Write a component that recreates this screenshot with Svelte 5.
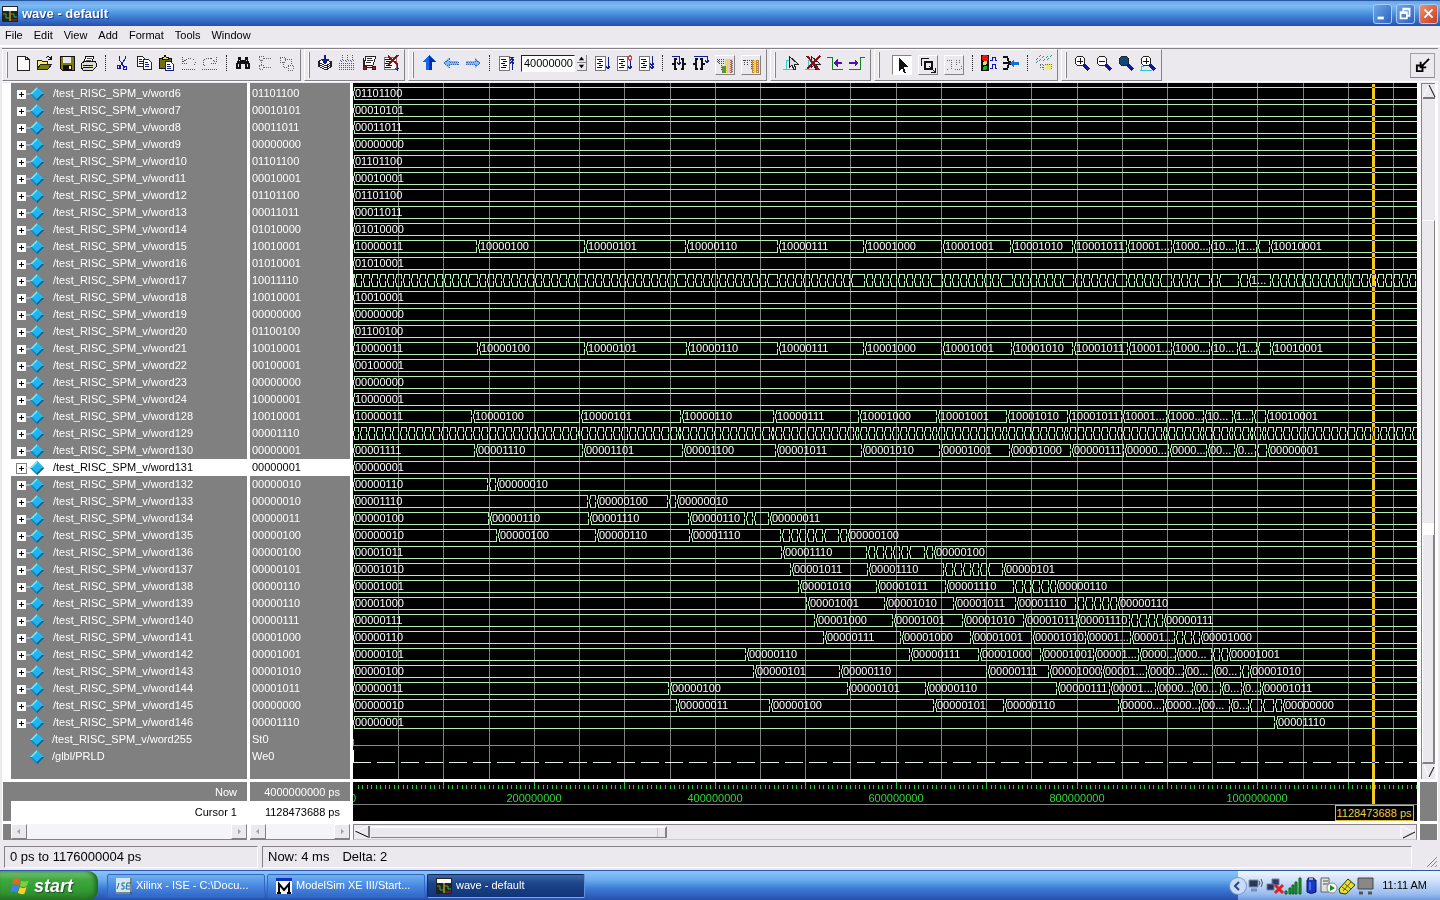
<script lang="ts">
	// window x of time 0, and pixels per 50 000 000 ps
	const ORIGIN = 353;
	const STEP = 45.22;

	const t15 = '10000011 478:10000100 586:10000101 687:10000110 779:10000111 865:10001000 943:10001001 1012:10001010 1074:10001011 1128:10001... 1173:1000... 1211:10... 1238:1... 1258: 1271:10010001';
	const t21 = '10000011 479:10000100 586:10000101 688:10000110 779:10000111 865:10001000 943:10001001 1013:10001010 1074:10001011 1129:10001... 1173:1000... 1211:10... 1239:1... 1258: 1272:10010001';
	const t128 = '10000011 473:10000100 581:10000101 682:10000110 775:10000111 860:10001000 938:10001001 1008:10001010 1069:10001011 1123:10001... 1168:1000... 1205:10... 1234:1... 1254: 1267:10010001';

	// repeated counter steps that start over at every change of the program counter
	function ticks(resets: number[], end: number, minGap: number) {
		const out: number[] = [];
		resets.forEach((from, i) => {
			const to = resets[i + 1] ?? end;
			out.push(from);
			for (let x = from + 8.05; x < to - minGap; x += 8.05) out.push(Math.round(x));
		});
		return out.map((x) => x + ':').join(' ');
	}
	const t17 = ' ' + ticks([355, 479, 587, 687, 779, 866, 944, 1014, 1075, 1128, 1173, 1211], 1233, 8) + ' 1240: 1249:1... ' + ticks([1272], 2600, 0);
	const t129 = ' ' + ticks([360, 473, 581, 682, 775, 860, 938, 1008, 1069, 1123, 1168, 1205, 1234, 1254, 1267], 2600, 3);

	const data: [string, string, string?][] = [
		['word6', '01101100'],
		['word7', '00010101'],
		['word8', '00011011'],
		['word9', '00000000'],
		['word10', '01101100'],
		['word11', '00010001'],
		['word12', '01101100'],
		['word13', '00011011'],
		['word14', '01010000'],
		['word15', '10010001', t15],
		['word16', '01010001'],
		['word17', '10011110', t17],
		['word18', '10010001'],
		['word19', '00000000'],
		['word20', '01100100'],
		['word21', '10010001', t21],
		['word22', '00100001'],
		['word23', '00000000'],
		['word24', '10000001'],
		['word128', '10010001', t128],
		['word129', '00001110', t129],
		['word130', '00000001', '00001111 476:00001110 584:00001101 684:00001100 777:00001011 863:00001010 941:00001001 1011:00001000 1072:00000111 1125:00000... 1170:0000... 1208:00... 1236:0... 1257: 1268:00000001'],
		['word131', '00000001'],
		['word132', '00000010', '00000110 489: 497:00000010'],
		['word133', '00000010', '00001110 589: 597:00000100 669: 677:00000010'],
		['word134', '00000011', '00000100 490:00000110 590:00001110 690:00000110 746: 754: 770:00000011'],
		['word135', '00000100', '00000010 498:00000100 597:00000110 691:00001110 782: 791: 799: 807: 815: 824: 840: 848:00000100'],
		['word136', '00000100', '00001011 783:00001110 868: 876: 885: 893: 901: 909: 926: 934:00000100'],
		['word137', '00000101', '00001010 792:00001011 869:00001110 945: 954: 963: 972: 980: 988: 1004:00000101'],
		['word138', '00000110', '00001001 800:00001010 878:00001011 947:00001110 1015: 1024: 1032: 1041: 1050: 1057:00000110'],
		['word139', '00000110', '00001000 808:00001001 886:00001010 955:00001011 1017:00001110 1077: 1085: 1094: 1102: 1110: 1118:00000110'],
		['word140', '00000111', '00000111 816:00001000 894:00001001 964:00001010 1025:00001011 1078:00001110 1131: 1139: 1148: 1156: 1164:00000111'],
		['word141', '00001000', '00000110 825:00000111 902:00001000 972:00001001 1033:00001010 1087:00001... 1132:00001... 1176: 1184: 1193: 1201:00001000'],
		['word142', '00001001', '00000101 747:00000110 911:00000111 980:00001000 1042:00001001 1095:00001... 1140:0000... 1177:000... 1213: 1221: 1229:00001001'],
		['word143', '00001010', '00000100 755:00000101 841:00000110 988:00000111 1050:00001000 1103:00001... 1148:0000... 1185:00... 1214:00... 1242: 1250:00001010'],
		['word144', '00001011', '00000011 670:00000100 849:00000101 927:00000110 1058:00000111 1111:00001... 1157:0000... 1194:00... 1222:0... 1243:0... 1262:00001011'],
		['word145', '00000000', '00000010 678:00000011 771:00000100 935:00000101 1005:00000110 1120:00000... 1165:0000... 1201:00... 1231:0... 1250: 1263: 1275: 1283:00000000'],
		['word146', '00001110', '00000001 1276:00001110']
	];

	const buses = data.map(([name, value, trace], row) => {
		const top = 4 + row * 17;
		const parts = (trace ?? value).split(' ');
		const edges = parts.slice(1).map((p) => Number(p.split(':')[0]) - ORIGIN);
		const labels = [{ x: 2, text: parts[0] }, ...parts.slice(1).map((p, i) => ({ x: edges[i] + 2, text: p.split(':')[1] }))];
		let d = '';
		[0, ...edges].forEach((x, i) => {
			const end = edges[i] ?? 3000;
			d += `M${x} ${top + 8}V${top + 5}L${x + 1} ${top + 4}V${top}H${end - 2}V${top + 3}L${end - 1} ${top + 5}`;
			d += `M${x} ${top + 8}L${x + 1} ${top + 9}V${top + 12}H${end - 2}V${top + 9}L${end - 1} ${top + 7}`;
		});
		return { name: '/test_RISC_SPM_v/' + name, value, top, d, labels: labels.filter((l) => l.text) };
	});

	const rows = [
		...buses.map((b) => ({ name: b.name, value: b.value, bus: true })),
		{ name: '/test_RISC_SPM_v/word255', value: 'St0', bus: false },
		{ name: '/glbl/PRLD', value: 'We0', bus: false }
	];
	let selected = $state('/test_RISC_SPM_v/word131');

	const grid = Array.from({ length: 60 }, (_, i) => Math.round((i + 1) * STEP));
	const minor = Array.from({ length: 600 }, (_, i) => Math.round((i + 1) * STEP / 10));
	const times = Array.from({ length: 6 }, (_, i) => ({ x: Math.round(i * 4 * STEP), label: String(i * 200000000) }));
	const cursorX = 1021;

	const menus = ['File', 'Edit', 'View', 'Add', 'Format', 'Tools', 'Window'];

	const sheet = '<path d="M1 1H11V15H1z" fill="#fff" stroke="#777"/><path d="M3 4H8M5 6H9M3 8H7M5 10H9M3 12H8" stroke="#111"/>';
	const lens = '<path d="M10 10L15 15" stroke="#1018a0" stroke-width="3"/><circle cx="6" cy="6" r="5" fill="LENS" stroke="#222"/>';
	const pointer = '<path d="M0 14H13M3 14V5H6" stroke="#30d0d8" fill="none"/><path d="M6 1V13L9 10L11 15L13 14L11 9H15z" fill="#ddd" stroke="#222"/>';
	const icons: Record<string, string> = {
		new: '<path d="M2 1H10L14 4V15H2z" fill="#fff" stroke="#222"/><path d="M10 1V4H14" fill="none" stroke="#222"/>',
		open: '<path d="M0 14V5H4L5 6H10V9" fill="#f8f060" stroke="#222"/><path d="M0 14L4 9H15L11 14z" fill="#808000" stroke="#222"/><path d="M9 3Q12 0 14 4M14 1V4H11" fill="none" stroke="#111"/>',
		save: '<path d="M1 1H15V15H3L1 13z" fill="#808000" stroke="#111"/><path d="M4 2H12V8H4z" fill="#e8e8e8"/><path d="M4 10H13V15H4z" fill="#111"/><path d="M10 11H12V14H10z" fill="#eee"/>',
		print: '<path d="M5 1H13L11 7H3z" fill="#fff" stroke="#111"/><path d="M1 8L4 6H14L15 8V12L12 15H2L0 12z" fill="#ddd" stroke="#111"/><path d="M2 10H12M2 12H12" stroke="#111"/><path d="M6 3H11M5 5H10" stroke="#555"/><path d="M8 11H10V12H8z" fill="#e8e000"/>',
		cut: '<path d="M5 1V4L8 9L11 13M11 1V4L8 9L5 13" fill="none" stroke="#102080"/><circle cx="5" cy="12" r="2" fill="none" stroke="#1010c0"/><circle cx="11" cy="13" r="2" fill="none" stroke="#1010c0"/>',
		copy: '<path d="M1 1H6L9 4V11H1z" fill="#fff" stroke="#222"/><path d="M3 4H6M3 6H7M3 8H7" stroke="#222"/><path d="M7 4H12L15 7V14H7z" fill="#fff" stroke="#102080"/><path d="M9 7H12M9 9H13M9 11H13" stroke="#102080"/>',
		paste: '<path d="M1 3H13V13H1z" fill="#707010" stroke="#111"/><path d="M4 4V2H6L7 0L8 2H10V4z" fill="#f0e840" stroke="#111"/><path d="M7 6H12L15 9V15H7z" fill="#fff" stroke="#102080"/><path d="M9 9H12M9 11H13M9 13H13" stroke="#102080"/>',
		undo: '<path d="M2 2V8H8M3 7L8 3H12L15 6V9L12 12M2 14H16" fill="none" stroke="#555" stroke-dasharray="1 1"/>',
		redo: '<path d="M14 2V8H8M13 7L9 3H4L1 6V9L4 12M0 14H15" fill="none" stroke="#555" stroke-dasharray="1 1"/>',
		find: '<path d="M3 2H6V5H10V2H13V5L15 9V14H10V9H6V14H1V9L3 5z" fill="#111"/><path d="M3 9V12M12 9V12M4 5H5M11 5H12" stroke="#ddd"/>',
		tree: '<path d="M2 1H6V5H2zM2 10H6V14H2zM4 5V10M7 3H15M7 12H15" fill="none" stroke="#666" stroke-dasharray="1 1"/>',
		path: '<path d="M1 2H6V7H1zM9 10H14V15H9zM6 4H12V9M4 7V12H8" fill="none" stroke="#666" stroke-dasharray="1 1"/>',
		compile: '<path d="M1 11L6 8L15 11L9 15z" fill="#fff" stroke="#222"/><path d="M1 9L6 6L15 9L9 13z" fill="#fff" stroke="#222"/><path d="M1 7L6 4L15 7L9 11z" fill="#fff" stroke="#222"/><path d="M8 0V7M5 4L8 8L11 4" fill="none" stroke="#102090" stroke-width="2"/>',
		compileAll: '<path d="M3 0V5M8 0V5M13 0V5M1 5L3 7L5 5M6 5L8 7L10 5M11 5L13 7L15 5M0 8H16M0 10H16M0 12H16M0 14H16" fill="none" stroke="#5050a0" stroke-dasharray="1 1"/>',
		simulate: '<path d="M5 1H15L12 10H3z" fill="#fff" stroke="#222"/><path d="M6 3H11M6 5H12M5 7H10" stroke="#333"/><path d="M2 3V12H13" fill="none" stroke="#222"/><circle cx="4" cy="13" r="2" fill="#a01830" stroke="#501018"/><circle cx="13" cy="13" r="2" fill="#a01830" stroke="#501018"/>',
		stopSim: '<path d="M1 2H13V14H1z" fill="#fff" stroke="#777"/><path d="M2 4H8M3 6H9M2 8H7M3 10H9M2 12H8" stroke="#111"/><path d="M5 1L15 10M15 0L5 10" stroke="#901010" stroke-width="2"/><path d="M14 10V16M12 13L14 15L16 13" stroke="#102090" fill="none"/>',
		up: '<path d="M8 0L15 7H11V15H5V7H1z" fill="#1068f0"/><path d="M8 1L14 7H11V15H8z" fill="#0828a0"/>',
		left: '<path d="M0 8L6 3V6H15V10H6V13z" fill="#88b8f0"/><path d="M1 8L6 4V7H15V9H6V12z" fill="none" stroke="#3868c8" stroke-dasharray="1 1"/>',
		right: '<path d="M16 8L10 3V6H1V10H10V13z" fill="#88b8f0"/><path d="M15 8L10 4V7H1V9H10V12z" fill="none" stroke="#3868c8" stroke-dasharray="1 1"/>',
		restart: sheet + '<path d="M14 2V15M11 2H16M12 6L14 3L16 6M12 9L14 6L16 9" stroke="#102090" fill="none"/>',
		run: sheet + '<path d="M14 2V14M12 11L14 14L16 11" stroke="#102090" fill="none"/>',
		cont: sheet + '<path d="M14 6V14M12 11L14 14L16 11" stroke="#102090" fill="none"/><path d="M14 0L16 3L14 6L12 3z" fill="#fff" stroke="#d04050"/>',
		runAll: sheet + '<path d="M14 1V14M12 8L14 11L16 8M12 11L14 14L16 11" stroke="#102090" fill="none"/>',
		stepIn: '<path d="M6 4H4V8L2 9L4 10V14H6M10 4H12V8L14 9L12 10V14H10" fill="none" stroke="#111" stroke-width="2"/><path d="M1 1H8V9M6 7L8 10L10 7" fill="none" stroke="#102090"/>',
		stepOver: '<path d="M5 4H3V8L1 9L3 10V14H5M7 4H9V8L11 9L9 10V14H7" fill="none" stroke="#111" stroke-width="2"/><path d="M1 1H14V7M12 5L14 8L16 5" fill="none" stroke="#102090"/>',
		profile: '<path d="M8 2H16V16H8z" fill="#e0d840"/><path d="M13 3H16V16H13z" fill="#c06050"/><path d="M5 9H9V16H5z" fill="#609040"/><path d="M0 2H7M0 4H7M2 6H7M4 8V13M1 3V6" stroke="#444" stroke-dasharray="1 1"/><path d="M9 2V16M11 3V16M13 2V16M15 3V16" stroke="#ddd" stroke-dasharray="1 1"/>',
		memory: '<path d="M9 3H16V16H9z" fill="#c08050"/><path d="M11 3H13V16H11z" fill="#e0d840"/><path d="M1 8V3H4V8M4 3H8V12M0 3H9" stroke="#444" fill="none" stroke-dasharray="1 1"/><path d="M10 2V16M12 3V16M14 2V16" stroke="#ddd" stroke-dasharray="1 1"/>',
		cursorAdd: pointer,
		cursorDel: pointer + '<path d="M2 1L14 15M15 1L2 14" stroke="#881018" stroke-width="2"/>',
		prevEdge: '<path d="M0 2H5V14H16" fill="none" stroke="#108020"/><path d="M7 8H15M10 5L7 8L10 11z" stroke="#5010b0" fill="#5010b0"/><path d="M8 8H15" stroke="#5010b0" stroke-width="2"/>',
		nextEdge: '<path d="M0 14H11V2H16" fill="none" stroke="#108020"/><path d="M6 5L9 8L6 11z" stroke="#5010b0" fill="#5010b0"/><path d="M0 8H8" stroke="#5010b0" stroke-width="2"/>',
		select: '<path d="M5 1V14L8 11L10 16H12L10 10H14z" fill="#111"/>',
		zoomMode: '<path d="M1 9V1H9" fill="none" stroke="#111"/><path d="M5 5H12V12H5z" fill="none" stroke="#111" stroke-width="2"/><path d="M9 9L15 15M15 11V15H11" stroke="#111" fill="none"/>',
		editMode: '<path d="M1 3H5V12M1 12H3M9 12H15V9M10 3V8M13 3V6" fill="none" stroke="#666" stroke-dasharray="1 1"/>',
		stopWave: '<path d="M0 0H8V16H0z" fill="#111"/><circle cx="4" cy="3" r="3" fill="#f01010"/><circle cx="4" cy="8" r="2" fill="#e8e040"/><circle cx="4" cy="13" r="2" fill="#20b030"/><path d="M9 5H11V2H14V5H16M9 13H11V9H14V13H16" fill="none" stroke="#1010c0"/>',
		combine: '<path d="M0 2H4L6 7H8M0 14H4L6 9H8M0 8H6" fill="none" stroke="#111" stroke-width="2"/><path d="M7 8L11 4V7H16V10H11V13z" fill="#1070e0"/>',
		memWave: '<path d="M0 5L5 0M3 6L9 0M7 6L13 0M11 5L16 0M0 8L3 5" stroke="#209090" stroke-dasharray="1 1"/><path d="M10 9H15V15H9z" fill="#f0e880"/><path d="M4 9H7V12H4zM7 12V15M9 9H15V15" fill="none" stroke="#666" stroke-dasharray="1 1"/>',
		zoomIn: lens.replace('LENS', '#fff') + '<path d="M3 6H9M6 3V9" stroke="#111"/>',
		zoomOut: lens.replace('LENS', '#fff') + '<path d="M3 6H9" stroke="#111"/>',
		zoomFull: lens.replace('LENS', '#104878'),
		zoomCursor: '<path d="M0 15H12M1 15V11H4" stroke="#30c0e0" fill="none"/>' + lens.replace('LENS', '#fff') + '<path d="M3 6H9M6 3V9" stroke="#111"/>'
	};

	type Tool = [string, string] | '|' | 'time';
	const groups: Tool[][] = [
		[['new', 'New'], ['open', 'Open'], ['save', 'Save'], ['print', 'Print'], '|', ['cut', 'Cut'], ['copy', 'Copy'], ['paste', 'Paste'], ['undo', 'Undo'], ['redo', 'Redo'], '|', ['find', 'Find'], ['tree', 'Expand'], ['path', 'Collapse']],
		[['compile', 'Compile'], ['compileAll', 'Compile all'], ['simulate', 'Simulate'], ['stopSim', 'Break']],
		[['up', 'Up'], ['left', 'Back'], ['right', 'Forward'], '|', ['restart', 'Restart'], 'time', ['run', 'Run'], ['cont', 'Continue'], ['runAll', 'Run all'], '|', ['stepIn', 'Step'], ['stepOver', 'Step over'], ['profile', 'Profile'], ['memory', 'Memory profile']],
		[['cursorAdd', 'Insert cursor'], ['cursorDel', 'Delete cursor'], ['prevEdge', 'Previous edge'], ['nextEdge', 'Next edge']],
		[['select', 'Select mode'], ['zoomMode', 'Zoom mode'], ['editMode', 'Edit mode'], '|', ['stopWave', 'Stop drawing'], ['combine', 'Combine'], '|', ['memWave', 'Show drivers']],
		[['zoomIn', 'Zoom in'], ['zoomOut', 'Zoom out'], ['zoomFull', 'Zoom full'], ['zoomCursor', 'Zoom on cursor']]
	];
	const framed = ['profile', 'memory', 'select', 'zoomMode', 'editMode'];
</script>

{#snippet waveLogo()}
	<svg class="logo" viewBox="0 0 16 16" aria-hidden="true">
		<path d="M0 0H16V16H0z" fill="#222" /><path d="M1 1H15V5H1z" fill="#fff" />
		<path d="M1 8H4V12H7M9 8H12V11H15" stroke="#40b040" fill="none" />
		<path d="M8 5V15" stroke="#f0e020" stroke-width="1" /><path d="M9 14H15" stroke="#c02020" />
	</svg>
{/snippet}

<div class="app">
	<header class="titlebar">
		{@render waveLogo()}
		<h1>wave - default</h1>
		<button class="win" aria-label="Minimize"><svg viewBox="0 0 19 19"><path d="M4 13H11V16H4z" fill="#fff" /></svg></button>
		<button class="win" aria-label="Restore"><svg viewBox="0 0 19 19"><path d="M4 8H11V15H4zM4 9H11M7 8V4H14V12H11M7 5H14" fill="none" stroke="#fff" stroke-width="2" /></svg></button>
		<button class="win close" aria-label="Close"><svg viewBox="0 0 19 19"><path d="M5 5L14 14M14 5L5 14" stroke="#fff" stroke-width="2" /></svg></button>
	</header>

	<nav class="menubar">
		{#each menus as menu}<button>{menu}</button>{/each}
	</nav>

	<div class="toolbar">
		{#each groups as group}
			<div class="group">
				{#each group as tool}
					{#if tool === '|'}
						<span class="sep"></span>
					{:else if tool === 'time'}
						<span class="spinner">
							<input aria-label="Run length" value="40000000" />
							<span class="steps">
								<button aria-label="Increase"><svg viewBox="0 0 10 8"><path d="M5 2L8 6H2z" /></svg></button>
								<button aria-label="Decrease"><svg viewBox="0 0 10 8"><path d="M5 6L8 2H2z" /></svg></button>
							</span>
						</span>
					{:else}
						<button class="tool" class:framed={framed.includes(tool[0])} class:on={tool[0] === 'select'} aria-label={tool[1]}>
							<svg viewBox="0 0 16 16">{@html icons[tool[0]]}</svg>
						</button>
					{/if}
				{/each}
			</div>
		{/each}
		<button class="dock" aria-label="Dock window">
			<svg viewBox="0 0 16 16"><path d="M2 8H8V14H2z" fill="none" stroke="#000" stroke-width="2" /><path d="M15 1L6 10M6 4V10H12" fill="none" stroke="#000" stroke-width="2" /></svg>
		</button>
	</div>

	<main class="panes">
		<div class="names">
			<ul>
				{#each rows as row}
					<li class:selected={row.name === selected}>
						<svg class="branch" viewBox="0 0 22 17" aria-hidden="true">
							{#if row.bus}<path d="M3 9H10" stroke="#ddd" />{/if}
							<path d="M8 9L15 2L22 9L15 16z" fill="#008cc8" />
							<path d="M8 9L15 2V9z" fill="#80f0ff" />
							<path d="M15 2L22 9H15z" fill="#20c0f0" />
							<path d="M15 16L22 9L15 9z" fill="#005880" />
							<path d="M10 9L15 4L20 9L15 14z" fill="#20b4f0" />
						</svg>
						{#if row.bus}<button class="plus" aria-label="Expand {row.name}"></button>{/if}
						<button class="name" onclick={() => (selected = row.name)}>{row.name}</button>
					</li>
				{/each}
			</ul>
		</div>
		<ul class="values">
			{#each rows as row}<li class:selected={row.name === selected}>{row.value}</li>{/each}
		</ul>
		<div class="wave" id="wave">
			<svg aria-label="Waveforms">
				<g stroke="#808080" shape-rendering="crispEdges">
					{#each grid as x}<line x1={x} x2={x} y1="0" y2="100%" />{/each}
				</g>
				{#each buses as bus}
					<path class="trace" d={bus.d} />
					{#each bus.labels as label}<text x={label.x} y={bus.top + 10}>{label.text}</text>{/each}
				{/each}
				<path d="M0 656V662H3000" class="scalar" />
				<path d="M0 667V679" stroke="#fff" stroke-width="2" />
				<path d="M0 679H3000" stroke="#e4f0e4" stroke-dasharray="18 6" shape-rendering="crispEdges" />
				<rect class="cursor" x={cursorX - 2} y="1" width="3" height="100%" />
			</svg>
		</div>
		<div class="vscroll" role="scrollbar" aria-controls="wave" aria-valuenow="60" tabindex="-1">
			<svg viewBox="0 0 14 15"><path d="M1 14L7 1" stroke="#fff" /><path d="M7 1L13 13M1 14H13" stroke="#000" /></svg>
			<span class="vtrough"></span>
			<span class="vthumb"></span>
			<span class="vseam"></span>
			<span class="vrest"></span>
			<svg viewBox="0 0 14 15"><path d="M2 1L7 14" stroke="#fff" /><path d="M7 13L12 3" stroke="#000" /></svg>
		</div>

		<div class="info">
			<p>Now</p>
			<p class="white indent">Cursor 1</p>
		</div>
		<div class="info">
			<p>4000000000 ps</p>
			<p class="white">1128473688 ps</p>
		</div>
		<div class="ruler">
			<svg aria-label="Timeline">
				<g stroke="#30c838" shape-rendering="crispEdges">
					{#each minor as x}<line x1={x} x2={x} y1="3" y2="7" />{/each}
					{#each grid as x, i}{#if i % 2}<line x1={x} x2={x} y1="0" y2="7" />{/if}{/each}
				</g>
				{#each times as time}<text class="time" x={time.x} y="20">{time.label}</text>{/each}
				<path d="M0 22H3000" stroke="#808080" shape-rendering="crispEdges" />
				<rect class="cursor" x={cursorX - 2} y="0" width="3" height="22" />
				<rect x={cursorX - 39} y="23" width="78" height="15" class="tag" />
				<text class="tagtext" x={cursorX} y="35">1128473688 ps</text>
			</svg>
		</div>
		<div class="corner"></div>

		<div class="hscroll indent">
			<button aria-label="Scroll names left"><svg viewBox="0 0 14 14"><path d="M8 4V10L5 7z" /></svg></button>
			<button aria-label="Scroll names right"><svg viewBox="0 0 14 14"><path d="M6 4V10L9 7z" /></svg></button>
		</div>
		<div class="hscroll">
			<button aria-label="Scroll values left"><svg viewBox="0 0 14 14"><path d="M8 4V10L5 7z" /></svg></button>
			<button aria-label="Scroll values right"><svg viewBox="0 0 14 14"><path d="M6 4V10L9 7z" /></svg></button>
		</div>
		<div class="wscroll">
			<svg viewBox="0 0 16 14"><path d="M1 6L14 12M15 1V13" stroke="#000" fill="none" /><path d="M1 6L14 1" stroke="#fff" /></svg>
			<span class="thumb"></span>
			<svg viewBox="0 0 16 14"><path d="M1 1V12M1 1L14 7" stroke="#fff" /><path d="M3 13L15 7" stroke="#000" /></svg>
		</div>
		<div class="corner"></div>
	</main>

	<footer class="status">
		<p class="range">0 ps to 1176000004 ps</p>
		<p class="now"><span>Now: 4 ms</span><span>Delta: 2</span></p>
		<svg viewBox="0 0 12 12" aria-hidden="true"><path d="M1 11L11 1M5 11L11 5M9 11L11 9" stroke="#888" /></svg>
	</footer>

	<div class="taskbar">
		<button class="start">
			<svg viewBox="0 0 18 18" aria-hidden="true">
				<path d="M3 3Q6 1 9 3L8 8Q5 6 2 8z" fill="#f06028" />
				<path d="M10 4Q13 6 17 4L15 9Q12 11 9 9z" fill="#80d038" />
				<path d="M2 9Q5 7 8 9L6 15Q3 13 0 15z" fill="#4080f0" />
				<path d="M9 10Q12 12 15 10L13 16Q10 17 7 15z" fill="#f8d030" />
			</svg>
			start
		</button>
		<button class="task">
			<svg class="logo" viewBox="0 0 16 16" aria-hidden="true"><path d="M0 0H16V16H0z" fill="#d0e8f0" /><path d="M1 11L3 5M5 11H8V8H6V5H9M15 5H11L10 11H14M11 8H14" stroke="#286898" fill="none" /><path d="M0 15H16M15 0V16" stroke="#222" /></svg>
			Xilinx - ISE - C:\Docu...
		</button>
		<button class="task">
			<svg class="logo" viewBox="0 0 16 16" aria-hidden="true"><path d="M0 0H16V16H0z" fill="#f4f4f4" /><path d="M0 0H16V3H0z" fill="#1030c0" /><path d="M3 16V6L8 12L13 6V16M1 15H5M11 15H15" stroke="#000" stroke-width="2" fill="none" /></svg>
			ModelSim XE III/Start...
		</button>
		<button class="task active">{@render waveLogo()} wave - default</button>
		<div class="tray">
			<button class="chevron" aria-label="Show hidden icons"><svg viewBox="0 0 16 16"><path d="M9 4L5 8L9 12" fill="none" stroke="#204888" stroke-width="2" /></svg></button>
			<svg viewBox="0 0 18 18" aria-hidden="true"><path d="M1 3H10V10H1z" fill="#283858" stroke="#8090a8" /><path d="M3 13H9" stroke="#7090c0" stroke-width="3" /><path d="M11 4Q13 6 11 8M13 2Q16 6 13 10" fill="none" stroke="#405070" /></svg>
			<svg viewBox="0 0 18 18" aria-hidden="true"><path d="M6 2H13V8H6z" fill="#303868" stroke="#7080a0" /><path d="M1 7H8V13H1z" fill="#283060" stroke="#7080a0" /><path d="M9 8L17 16M17 8L9 16" stroke="#e02020" stroke-width="3" /></svg>
			<svg viewBox="0 0 18 18" aria-hidden="true"><path d="M1 14H3V17H1zM5 11H7V17H5zM8 8H10V17H8zM11 5H13V17H11zM15 1H17V17H15z" fill="#18a028" stroke="#106018" /></svg>
			<svg viewBox="0 0 18 18" aria-hidden="true"><path d="M6 1H12V3H14V15Q9 18 5 15V3H6z" fill="#1838c8" stroke="#101850" /><path d="M8 5V13" stroke="#80a8ff" /><path d="M7 1H11V3H7z" fill="#aab" /></svg>
			<svg viewBox="0 0 18 18" aria-hidden="true"><path d="M1 1H9V15H1z" fill="#e0e0d8" stroke="#606060" /><path d="M3 4H8M3 7H8" stroke="#555" /><circle cx="12" cy="11" r="5" fill="#fff" stroke="#888" /><path d="M10 8V14L15 11z" fill="#109020" /></svg>
			<svg viewBox="0 0 18 18" aria-hidden="true"><path d="M1 12L10 2L17 8L8 17L2 16z" fill="#e8e030" stroke="#303000" /><path d="M4 10L11 15M7 7L13 12M5 14L13 5" stroke="#606000" /></svg>
			<svg viewBox="0 0 18 18" aria-hidden="true"><path d="M2 1H17V12H2z" fill="#888" stroke="#444" /><path d="M3 16H7M12 16H16" stroke="#555" stroke-width="3" /></svg>
			<time>11:11 AM</time>
		</div>
	</div>
</div>

<style>
	:global(body) { background: #ebe9ed; }
	.app {
		display: flex;
		flex-direction: column;
		min-height: 100vh;
		overflow: hidden;
		font: 11px/17px "Liberation Sans", Arial, sans-serif;
		color: #000;
	}
	button { font: inherit; color: inherit; padding: 0; border: 0; background: none; }
	svg { display: block; flex: none; }
	ul { list-style: none; margin: 0; padding: 0; }
	p, h1 { margin: 0; }
	.logo { width: 16px; height: 16px; }

	.titlebar {
		display: flex;
		align-items: center;
		gap: 4px;
		height: 26px;
		box-sizing: border-box;
		padding: 0 2px;
		border-top: 1px solid #2858a0;
		background: linear-gradient(#6aa4ea, #7cbaf2 20%, #4a92e0 50%, #3a76cc 70%, #2850ae);
	}
	h1 { flex: 1; font-size: 13px; line-height: 24px; color: #fff; text-shadow: 1px 1px #1c3c88; }
	.win {
		width: 19px;
		height: 20px;
		box-sizing: border-box;
		border: 1px solid #a8ccf4;
		border-radius: 3px;
		background: linear-gradient(135deg, #6ea8e8, #2c60c0);
	}
	.win svg { width: 17px; height: 17px; }
	.win.close { background: linear-gradient(135deg, #f09070, #c83c20); }

	.menubar {
		display: flex;
		gap: 11px;
		height: 19px;
		padding-left: 5px;
		border-bottom: 2px solid #fff;
	}

	.toolbar {
		display: flex;
		align-items: center;
		gap: 3px;
		height: 32px;
		margin: 1px 2px;
		border-top: 1px solid #848284;
		border-bottom: 1px solid #fff;
	}
	.group {
		display: flex;
		align-items: center;
		height: 32px;
		padding: 0 2px 4px 7px;
		border: 1px solid #fff;
		border-right-color: #848284;
		border-bottom-color: #848284;
		box-sizing: border-box;
	}
	.group::before {
		content: "";
		align-self: stretch;
		width: 2px;
		margin: 2px 4px -2px -4px;
		border-left: 1px solid #fff;
		border-right: 1px solid #848284;
		box-sizing: border-box;
	}
	.tool { width: 22px; height: 22px; }
	.tool svg { width: 16px; height: 16px; margin: 0 auto; shape-rendering: crispEdges; }
	.framed {
		width: 20px;
		height: 20px;
		margin: 3px 3px 0;
		border: 1px solid #fff;
		border-right-color: #848284;
		border-bottom-color: #848284;
	}
	.framed.on { margin-left: 8px; background: #fff; border-color: #848284 #fff #fff #848284; }
	.sep { width: 1px; height: 16px; margin: 0 5px; border-left: 1px dotted #222; box-sizing: border-box; }
	.spinner { display: flex; align-items: center; gap: 2px; margin: 0 4px; }
	.spinner input {
		width: 54px;
		height: 17px;
		box-sizing: border-box;
		border: 1px solid #848284;
		border-color: #222 #fff #fff #222;
		padding: 0 0 0 2px;
		font: inherit;
		background: #fff;
	}
	.steps { display: grid; }
	.steps button { width: 10px; height: 8px; border-right: 1px solid #848284; border-bottom: 1px solid #848284; box-sizing: border-box; }
	.steps svg { width: 9px; height: 7px; }
	.dock {
		width: 25px;
		height: 25px;
		margin-left: auto;
		margin-right: 3px;
		border: 1px solid #a0a0a0;
		border-bottom-color: #888;
	}
	.dock svg { width: 15px; height: 15px; margin: auto; }

	.panes {
		flex: 1;
		display: grid;
		grid-template-columns: 244px 100px 1fr 17px;
		grid-template-rows: 1fr 39px 16px;
		gap: 3px;
		margin: 0 2px;
		padding: 0 1px;
		background: #fff;
	}
	.panes > * { min-width: 0; }
	.names { background: #808080; border-left: 8px solid #fff; padding-top: 2px; color: #fff; }
	.names li { display: flex; align-items: center; height: 17px; }
	.selected { background: #fff; color: #000; }
	.branch { order: 2; width: 22px; height: 17px; }
	.plus {
		order: 1;
		width: 9px;
		height: 9px;
		margin: 2px -4px 0 6px;
		box-shadow: 0 0 0 1px #808080;
		background:
			linear-gradient(#000, #000) center / 5px 1px no-repeat,
			linear-gradient(#000, #000) center / 1px 5px no-repeat,
			#fff;
	}
	.plus + .name { margin-left: 9px; }
	li:not(:has(.plus)) .branch { margin-left: 11px; }
	.name { order: 3; margin-left: 8px; line-height: 17px; }
	.values { background: #808080; color: #fff; padding-top: 2px; }
	.values li { height: 17px; padding-left: 2px; }

	.wave, .ruler { position: relative; overflow: hidden; background: #000; }
	.wave svg, .ruler svg { position: absolute; inset: 0; width: 100%; height: 100%; }
	.wave text { fill: #fff; }
	.trace { fill: none; stroke: #b4f0b4; shape-rendering: crispEdges; }
	.scalar { fill: none; stroke: #30c838; shape-rendering: crispEdges; }
	.cursor { fill: #f4cc20; mix-blend-mode: difference; }
	.time { fill: #30d838; text-anchor: middle; }
	.tag { fill: #000; stroke: #e0bc30; shape-rendering: crispEdges; }
	.tagtext { fill: #f0cc40; text-anchor: middle; }

	.vscroll {
		display: flex;
		flex-direction: column;
		margin-right: 2px;
		margin-left: 1px;
		border-left: 1px solid #848284;
		border-top: 1px solid #848284;
		background: #ebe9ed;
	}
	.vscroll svg { width: 14px; height: 15px; }
	.vtrough { flex: 120; }
	.vthumb { flex: 301; border-top: 1px solid #fff; border-right: 1px solid #848284; }
	.vseam { flex: 12; background: #fff; border-right: 1px solid #848284; }
	.vrest { flex: 226; border-right: 2px solid #848284; border-bottom: 2px solid #848284; border-left: 1px solid #fff; }

	.info { background: #808080; text-align: right; color: #fff; }
	.info p { height: 19px; line-height: 20px; padding-right: 10px; }
	.info .white { height: 20px; line-height: 23px; background: #fff; color: #000; }
	.info .indent { margin-left: 8px; }
	.corner { background: #808080; }

	.hscroll {
		display: flex;
		justify-content: space-between;
		border-bottom: 1px solid #848284;
		box-sizing: border-box;
		background: #f5f4f6;
	}
	.hscroll.indent { border-left: 8px solid #808080; }
	.hscroll button { width: 16px; background: #ebe9ed; border: 1px solid #fff; border-right-color: #848284; border-bottom-color: #848284; }
	.hscroll svg { width: 14px; height: 13px; fill: #a0a0a0; }
	.wscroll { display: flex; align-items: center; border: 1px solid #848284; border-bottom-color: #ccc; box-sizing: border-box; background: #ebe9ed; }
	.wscroll svg { width: 16px; height: 14px; }
	.thumb {
		width: 296px;
		height: 12px;
		box-sizing: border-box;
		margin-left: 1px;
		margin-right: auto;
		border-top: 2px solid #fff;
		border-bottom: 1px solid #848284;
		border-right: 2px solid #848284;
		background: linear-gradient(#e8cc30, #e8cc30) 286px 0 / 1px 9px no-repeat;
	}

	.status {
		display: flex;
		gap: 4px;
		padding: 6px 2px 2px 4px;
		font-size: 13px;
		line-height: 20px;
	}
	.status p { border: 1px solid #848284; border-right-color: #fff; border-bottom-color: #fff; padding-left: 5px; }
	.range { width: 247px; }
	.now { flex: 1; display: flex; gap: 13px; }
	.status svg { align-self: flex-end; width: 12px; height: 12px; margin-left: 10px; }

	.taskbar {
		display: flex;
		align-items: center;
		gap: 2px;
		height: 30px;
		color: #fff;
		border-top: 1px solid #2858b0;
		box-sizing: border-box;
		background: linear-gradient(#8cc4f6, #6cacee 30%, #3c7cd6 60%, #2850ae);
	}
	.start {
		display: flex;
		align-items: center;
		gap: 4px;
		width: 98px;
		height: 29px;
		padding-left: 10px;
		margin-right: 7px;
		border-radius: 0 10px 10px 0;
		font: italic bold 18px/26px "Liberation Sans", Arial, sans-serif;
		text-shadow: 1px 1px 1px #205020;
		background: linear-gradient(#78c878, #40a840 30%, #309830 70%, #287828);
		box-shadow: inset -3px 0 4px #206820;
	}
	.start svg { width: 20px; height: 20px; }
	.task {
		display: flex;
		align-items: center;
		gap: 4px;
		width: 158px;
		height: 24px;
		padding-left: 8px;
		box-sizing: border-box;
		border: 1px solid #3468c0;
		border-radius: 2px;
		background: linear-gradient(#70b0f0, #4888e0 50%, #3068c8);
	}
	.task.active { border-color: #10285c #6090d8 #80a8e0 #10285c; background: linear-gradient(#3c68a8, #1c4488 40%, #103478); }
	.tray {
		display: flex;
		align-items: center;
		height: 29px;
		margin-left: auto;
		padding-right: 13px;
		color: #000;
		background: linear-gradient(#f0f6fe, #c8dcf8 40%, #98bcf0 80%, #7098dc);
	}
	.tray > svg { width: 18px; height: 18px; }
	.chevron { width: 16px; height: 16px; margin-left: -8px; margin-right: 2px; border-radius: 8px; background: #c8dcf8; box-shadow: 0 0 0 1px #7898c8; }
	.chevron svg { width: 16px; height: 16px; }
	.tray time { margin-left: 8px; }
</style>
